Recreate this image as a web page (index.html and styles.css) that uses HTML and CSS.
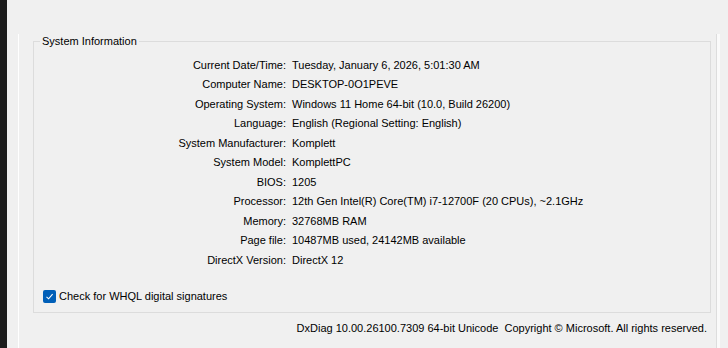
FILE: index.html
```html
<!DOCTYPE html>
<html lang="en">
<head>
    <meta charset="UTF-8">
    <meta name="viewport" content="width=device-width, initial-scale=1.0">
    <title>DirectX Diagnostic Tool</title>
    <link rel="stylesheet" href="styles.css">
</head>
<body>
    <div class="window">
        <div class="edge"></div>
        <div class="main">
            <div class="tab-page">
                <fieldset class="group">
                    <legend>System Information</legend>
                    <div class="info-grid">
                        <span class="label">Current Date/Time:</span>
                        <span class="value">Tuesday, January 6, 2026, 5:01:30 AM</span>
                        <span class="label">Computer Name:</span>
                        <span class="value">DESKTOP-0O1PEVE</span>
                        <span class="label">Operating System:</span>
                        <span class="value">Windows 11 Home 64-bit (10.0, Build 26200)</span>
                        <span class="label">Language:</span>
                        <span class="value">English (Regional Setting: English)</span>
                        <span class="label">System Manufacturer:</span>
                        <span class="value">Komplett</span>
                        <span class="label">System Model:</span>
                        <span class="value">KomplettPC</span>
                        <span class="label">BIOS:</span>
                        <span class="value">1205</span>
                        <span class="label">Processor:</span>
                        <span class="value">12th Gen Intel(R) Core(TM) i7-12700F (20 CPUs), ~2.1GHz</span>
                        <span class="label">Memory:</span>
                        <span class="value">32768MB RAM</span>
                        <span class="label">Page file:</span>
                        <span class="value">10487MB used, 24142MB available</span>
                        <span class="label">DirectX Version:</span>
                        <span class="value">DirectX 12</span>
                    </div>
                    <label class="check">
                        <span class="box">
                            <svg width="9" height="9" viewBox="0 0 9 9">
                                <path d="M1.5 4.8 L3.6 6.8 L7.6 2.2" fill="none" stroke="#fff" stroke-width="1.1"/>
                            </svg>
                        </span>
                        Check for WHQL digital signatures
                    </label>
                </fieldset>
                <div class="footer">DxDiag 10.00.26100.7309 64-bit Unicode&nbsp; Copyright &copy; Microsoft. All rights reserved.</div>
            </div>
        </div>
    </div>
</body>
</html>
```

FILE: styles.css
```css
body {
    margin: 0;
    padding: 0;
    background-color: #f0f0f0;
    font-family: "Liberation Sans", Arial, sans-serif;
    font-size: 11px;
    color: #000;
}
.window {
    display: flex;
    height: 348px;
    overflow: hidden;
}
.edge {
    width: 7px;
    background-color: #1c1c1c;
}
.main {
    flex: 1;
    padding: 0 11px 5px 11px;
}
.tab-page {
    height: 100%;
    box-sizing: border-box;
    border-left: 1px solid #fff;
    border-bottom: 1px solid #fff;
    border-right: 1px solid #dddddd;
    box-shadow: 3px 0 0 #fafafa;
    padding: 0 5px 0 14px;
}
.group {
    margin: 34px 0 0 0;
    padding: 7px 0 10px 0;
    border: 1px solid #dcdcdc;
    height: 279px;
    box-sizing: border-box;
}
.group legend {
    margin-left: 6px;
    padding: 0 2px;
    line-height: 14px;
}
.info-grid {
    display: grid;
    grid-template-columns: 252px 1fr;
    column-gap: 6px;
    grid-auto-rows: 19.5px;
    align-items: center;
}
.label {
    text-align: right;
}
.check {
    display: flex;
    align-items: center;
    gap: 3px;
    margin: 20px 0 0 9px;
}
.box {
    width: 13px;
    height: 13px;
    border-radius: 2px;
    background-color: #005fb8;
    display: flex;
    align-items: center;
    justify-content: center;
}
.footer {
    text-align: right;
    margin-top: 8px;
    padding-right: 4px;
    line-height: 14px;
}
```
